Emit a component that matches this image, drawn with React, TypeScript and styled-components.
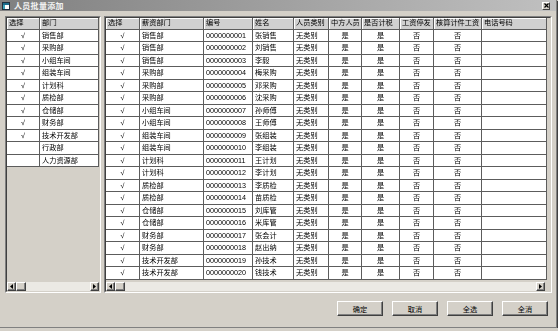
import styled, { createGlobalStyle } from "styled-components";

const GlobalStyle = createGlobalStyle`
  html, body {
    margin: 0;
    padding: 0;
    background: #d4d0c8;
  }
  body {
    font-family: "Liberation Sans", "Noto Sans CJK SC", sans-serif;
    color: #000;
  }
`;

const LINE = "#5c5c5c";

const Window = styled.div`
  width: 556px;
  height: 327px;
  background: #d4d0c8;
  border-right: 1px solid #808080;
  border-bottom: 1px solid #808080;
  box-shadow: 1px 1px 0 #404040;
  display: flex;
  flex-direction: column;
  overflow: hidden;
`;

const TitleBar = styled.div`
  height: 11px;
  flex: none;
  display: flex;
  align-items: center;
  gap: 4px;
  padding-left: 2px;
  background: linear-gradient(to right, #808080, #c0c0c0);
`;

const Title = styled.span`
  font-size: 8px;
  font-weight: bold;
  color: #f2f2f2;
  letter-spacing: 0.3px;
`;

const CloseButton = styled.div`
  margin-left: auto;
  margin-right: 6px;
  width: 8px;
  height: 8px;
  box-sizing: border-box;
  background: #d4d0c8;
  border: 1px solid;
  border-color: #fff #404040 #404040 #fff;
  display: flex;
  align-items: center;
  justify-content: center;
`;

const Panels = styled.div`
  display: flex;
  gap: 3px;
  padding-left: 5px;
  margin-top: 5px;
  height: 277px;
  flex: none;
`;

const Panel = styled.div<{ $width: number }>`
  width: ${(p) => p.$width}px;
  box-sizing: border-box;
  border: 1px solid;
  border-color: #808080 #fff #fff #808080;
`;

const PanelInner = styled.div`
  height: 100%;
  box-sizing: border-box;
  border: 1px solid;
  border-color: #404040 #d4d0c8 #d4d0c8 #404040;
  display: flex;
  flex-direction: column;
`;

const GridArea = styled.div`
  flex: 1;
  overflow: hidden;
  background: #d4d0c8;
`;

const Table = styled.div<{ $width: number }>`
  width: ${(p) => p.$width}px;
  filter: grayscale(1);
`;

const Row = styled.div<{ $cols: string; $head?: boolean }>`
  display: grid;
  grid-template-columns: ${(p) => p.$cols};
  height: ${(p) => (p.$head ? 11.5 : 12.5)}px;
  box-sizing: border-box;
  border-bottom: 1px solid ${LINE};
`;

const Cell = styled.div<{ $center?: boolean }>`
  background: #fff;
  border-right: 1px solid ${LINE};
  font-size: 7.2px;
  line-height: 11.5px;
  padding-left: ${(p) => (p.$center ? 0 : 2)}px;
  text-align: ${(p) => (p.$center ? "center" : "left")};
  white-space: nowrap;
  overflow: hidden;
`;

const HeadCell = styled.div`
  background: #d4d0c8;
  border-right: 1px solid ${LINE};
  box-shadow: inset 1px 1px 0 #fff;
  font-size: 7.2px;
  line-height: 10.5px;
  padding-left: 2px;
  white-space: nowrap;
  overflow: hidden;
`;

const ScrollBar = styled.div<{ $gapRight?: number }>`
  height: 9px;
  flex: none;
  display: flex;
  background: #ebe9e4;
  margin-right: ${(p) => p.$gapRight ?? 0}px;
`;

const ScrollButton = styled.div<{ $wide?: boolean }>`
  width: ${(p) => (p.$wide ? 10 : 9)}px;
  height: 9px;
  box-sizing: border-box;
  background: #d4d0c8;
  border: 1px solid;
  border-color: #fff #404040 #404040 #fff;
  box-shadow: inset -1px -1px 0 #808080;
  display: flex;
  align-items: center;
  justify-content: center;
`;

const Spacer = styled.div`
  flex: 1;
`;

const ButtonBar = styled.div`
  display: flex;
  justify-content: flex-end;
  gap: 9px;
  padding-right: 8px;
  margin-top: 8px;
`;

const Button = styled.button`
  width: 46px;
  height: 15px;
  padding: 0;
  box-sizing: border-box;
  background: #d4d0c8;
  border: 1px solid;
  border-color: #fff #404040 #404040 #fff;
  box-shadow: inset -1px -1px 0 #808080;
  font-family: inherit;
  font-size: 7.2px;
  color: #000;
`;

const Arrow = ({ dir }: { dir: "left" | "right" }) => (
  <svg width="3" height="5" viewBox="0 0 3 5">
    {dir === "left" ? (
      <polygon points="3,0 0,2.5 3,5" fill="#000" />
    ) : (
      <polygon points="0,0 3,2.5 0,5" fill="#000" />
    )}
  </svg>
);

const depts = [
  "销售部",
  "采购部",
  "小组车间",
  "组装车间",
  "计划科",
  "质检部",
  "仓储部",
  "财务部",
  "技术开发部",
  "行政部",
  "人力资源部",
];

const people: [string, string][] = [
  ["销售部", "张销售"],
  ["销售部", "刘销售"],
  ["销售部", "李毅"],
  ["采购部", "梅采购"],
  ["采购部", "邓采购"],
  ["采购部", "沈采购"],
  ["小组车间", "孙师傅"],
  ["小组车间", "王师傅"],
  ["组装车间", "张组装"],
  ["组装车间", "李组装"],
  ["计划科", "王计划"],
  ["计划科", "李计划"],
  ["质检部", "李质检"],
  ["质检部", "苗质检"],
  ["仓储部", "刘库管"],
  ["仓储部", "米库管"],
  ["财务部", "张会计"],
  ["财务部", "赵出纳"],
  ["技术开发部", "孙技术"],
  ["技术开发部", "钱技术"],
];

const leftCols = [33, 59];
const rightCols = [34, 64, 49, 41, 35, 33, 38, 34, 48, 65];
const toTemplate = (c: number[]) => c.map((w) => `${w}px`).join(" ");
const sum = (c: number[]) => c.reduce((a, b) => a + b, 0);

const rightHeads = [
  "选择",
  "薪资部门",
  "编号",
  "姓名",
  "人员类别",
  "中方人员",
  "是否计税",
  "工资停发",
  "核算计件工资",
  "电话号码",
];

function App() {
  return (
    <Window>
      <GlobalStyle />
      <TitleBar>
        <svg width="8" height="8" viewBox="0 0 8 8">
          <rect x="0.5" y="0.5" width="7" height="7" fill="#fff" stroke="#203040" />
          <rect x="1" y="1" width="6" height="2" fill="#1c6b8a" />
          <rect x="1" y="3" width="2" height="4" fill="#3aa0b8" />
        </svg>
        <Title>人员批量添加</Title>
        <CloseButton>
          <svg width="5" height="5" viewBox="0 0 5 5">
            <path d="M0.5 0.5 L4.5 4.5 M4.5 0.5 L0.5 4.5" stroke="#000" strokeWidth="1.2" />
          </svg>
        </CloseButton>
      </TitleBar>

      <Panels>
        <Panel $width={96}>
          <PanelInner>
            <GridArea>
              <Table $width={sum(leftCols)}>
                <Row $cols={toTemplate(leftCols)} $head>
                  <HeadCell>选择</HeadCell>
                  <HeadCell>部门</HeadCell>
                </Row>
                {depts.map((d, i) => (
                  <Row key={d} $cols={toTemplate(leftCols)}>
                    <Cell $center>{i < 9 ? "√" : ""}</Cell>
                    <Cell>{d}</Cell>
                  </Row>
                ))}
              </Table>
            </GridArea>
            <ScrollBar>
              <ScrollButton>
                <Arrow dir="left" />
              </ScrollButton>
              <ScrollButton $wide />
              <Spacer />
              <ScrollButton>
                <Arrow dir="right" />
              </ScrollButton>
            </ScrollBar>
          </PanelInner>
        </Panel>

        <Panel $width={448}>
          <PanelInner>
            <GridArea>
              <Table $width={sum(rightCols)}>
                <Row $cols={toTemplate(rightCols)} $head>
                  {rightHeads.map((h) => (
                    <HeadCell key={h}>{h}</HeadCell>
                  ))}
                </Row>
                {people.map(([dept, name], i) => (
                  <Row key={i} $cols={toTemplate(rightCols)}>
                    <Cell $center>√</Cell>
                    <Cell>{dept}</Cell>
                    <Cell>{String(i + 1).padStart(10, "0")}</Cell>
                    <Cell>{name}</Cell>
                    <Cell>无类别</Cell>
                    <Cell $center>是</Cell>
                    <Cell $center>是</Cell>
                    <Cell $center>否</Cell>
                    <Cell $center>否</Cell>
                    <Cell />
                  </Row>
                ))}
              </Table>
            </GridArea>
            <ScrollBar $gapRight={5}>
              <ScrollButton>
                <Arrow dir="left" />
              </ScrollButton>
              <ScrollButton $wide />
              <Spacer />
              <ScrollButton>
                <Arrow dir="right" />
              </ScrollButton>
            </ScrollBar>
          </PanelInner>
        </Panel>
      </Panels>

      <ButtonBar>
        <Button>确定</Button>
        <Button>取消</Button>
        <Button>全选</Button>
        <Button>全消</Button>
      </ButtonBar>
    </Window>
  );
}

export default App;
